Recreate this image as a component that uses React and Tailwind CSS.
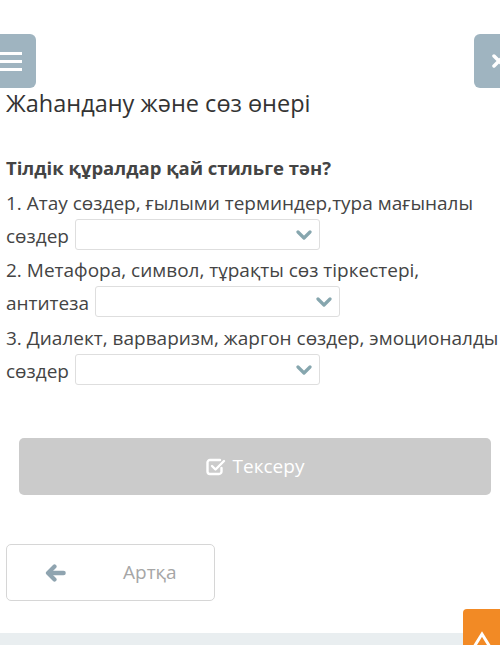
const Select = ({ width = 'w-[245px]' }) => (
    <span className={`inline-flex items-center justify-end align-middle ${width} h-[31px] -mt-[6px] ml-[6px] rounded-[3px] border border-[#dedede] bg-white pr-[7px]`}>
        <svg width="16" height="10" viewBox="0 0 16 10" fill="none" stroke="#86a6ae" strokeWidth="3.2" strokeLinecap="round" strokeLinejoin="round">
            <path d="M2 2l6 6 6-6" />
        </svg>
    </span>
);

const CheckSquare = () => (
    <svg width="20" height="18" viewBox="0 0 20 18" fill="none" stroke="white" strokeWidth="2.4" strokeLinecap="round" strokeLinejoin="round">
        <path d="M14 2H4a2.5 2.5 0 0 0-2.5 2.5v9A2.5 2.5 0 0 0 4 16h9a2.5 2.5 0 0 0 2.5-2.5V10" />
        <path d="M6 8l3.5 3.5L18 3" />
    </svg>
);

const ArrowLeft = () => (
    <svg width="21" height="18" viewBox="0 0 21 18" fill="none" stroke="#8fa4b0" strokeLinecap="round" strokeLinejoin="round">
        <path d="M9.5 2.5L3 9l6.5 6.5" strokeWidth="4.2" />
        <path d="M4 9h14.5" strokeWidth="4.6" />
    </svg>
);

export default function App() {
    return (
        <div className="relative w-[500px] h-[645px] overflow-hidden bg-white text-[#333]" style={{ fontFamily: '"Open Sans", "Noto Sans", sans-serif' }}>
            <div className="flex justify-between pt-[34px]">
                <button className="-ml-[14px] w-[50px] h-[54px] rounded-[6px] bg-[#9fb4c0] flex flex-col items-center justify-center gap-[5px]">
                    <span className="block w-[22px] h-[3px] bg-white" />
                    <span className="block w-[22px] h-[3px] bg-white" />
                    <span className="block w-[22px] h-[3px] bg-white" />
                </button>
                <button className="-mr-[24px] w-[50px] h-[54px] rounded-[6px] bg-[#9fb4c0] flex items-center justify-center">
                    <svg width="14" height="14" viewBox="0 0 14 14" stroke="white" strokeWidth="3.5" strokeLinecap="round">
                        <path d="M2 2l10 10M12 2L2 12" />
                    </svg>
                </button>
            </div>

            <h1 className="px-[6px] text-[23.5px] leading-[30px] text-[#333]">Жаһандану және сөз өнері</h1>

            <div className="px-[6px] mt-[37px]">
                <p className="text-[18.5px] leading-[26px] font-bold text-[#444]">Тілдік құралдар қай стильге тән?</p>

                <div className="mt-[6px] text-[19px] leading-[33px] text-[#444] whitespace-nowrap">
                    <p>
                        1. Атау сөздер, ғылыми терминдер,тура мағыналы<br />
                        сөздер<Select />
                    </p>
                    <p className="mt-[1px]">
                        2. Метафора, символ, тұрақты сөз тіркестері,<br />
                        антитеза<Select />
                    </p>
                    <p className="mt-[2px]">
                        3. Диалект, варваризм, жаргон сөздер, эмоционалды<br />
                        сөздер<Select />
                    </p>
                </div>
            </div>

            <div className="px-[19px] mt-[50px] pr-[9px]">
                <button className="w-full h-[57px] rounded-[5px] bg-[#cbcbcb] flex items-center justify-center gap-[7px] text-white text-[19px]">
                    <CheckSquare />
                    <span>Тексеру</span>
                </button>
            </div>

            <div className="px-[6px] mt-[49px]">
                <button className="w-[209px] h-[57px] rounded-[5px] border border-[#d6d6d6] bg-white flex items-center pl-[38px]">
                    <ArrowLeft />
                    <span className="ml-[57px] text-[19px] text-[#a6a6a6]">Артқа</span>
                </button>
            </div>

            <div className="absolute left-0 right-0 bottom-0 h-[12px] bg-[#e9eef0]" />
            <div className="absolute right-0 bottom-0 w-[37px] h-[36px] rounded-tl-[4px] bg-[#f28a25] flex items-end justify-center overflow-hidden">
                <svg width="24" height="14" viewBox="0 0 24 14" fill="none" stroke="white" strokeWidth="3">
                    <path d="M4 16L12 3l8 13" />
                </svg>
            </div>
        </div>
    );
}
